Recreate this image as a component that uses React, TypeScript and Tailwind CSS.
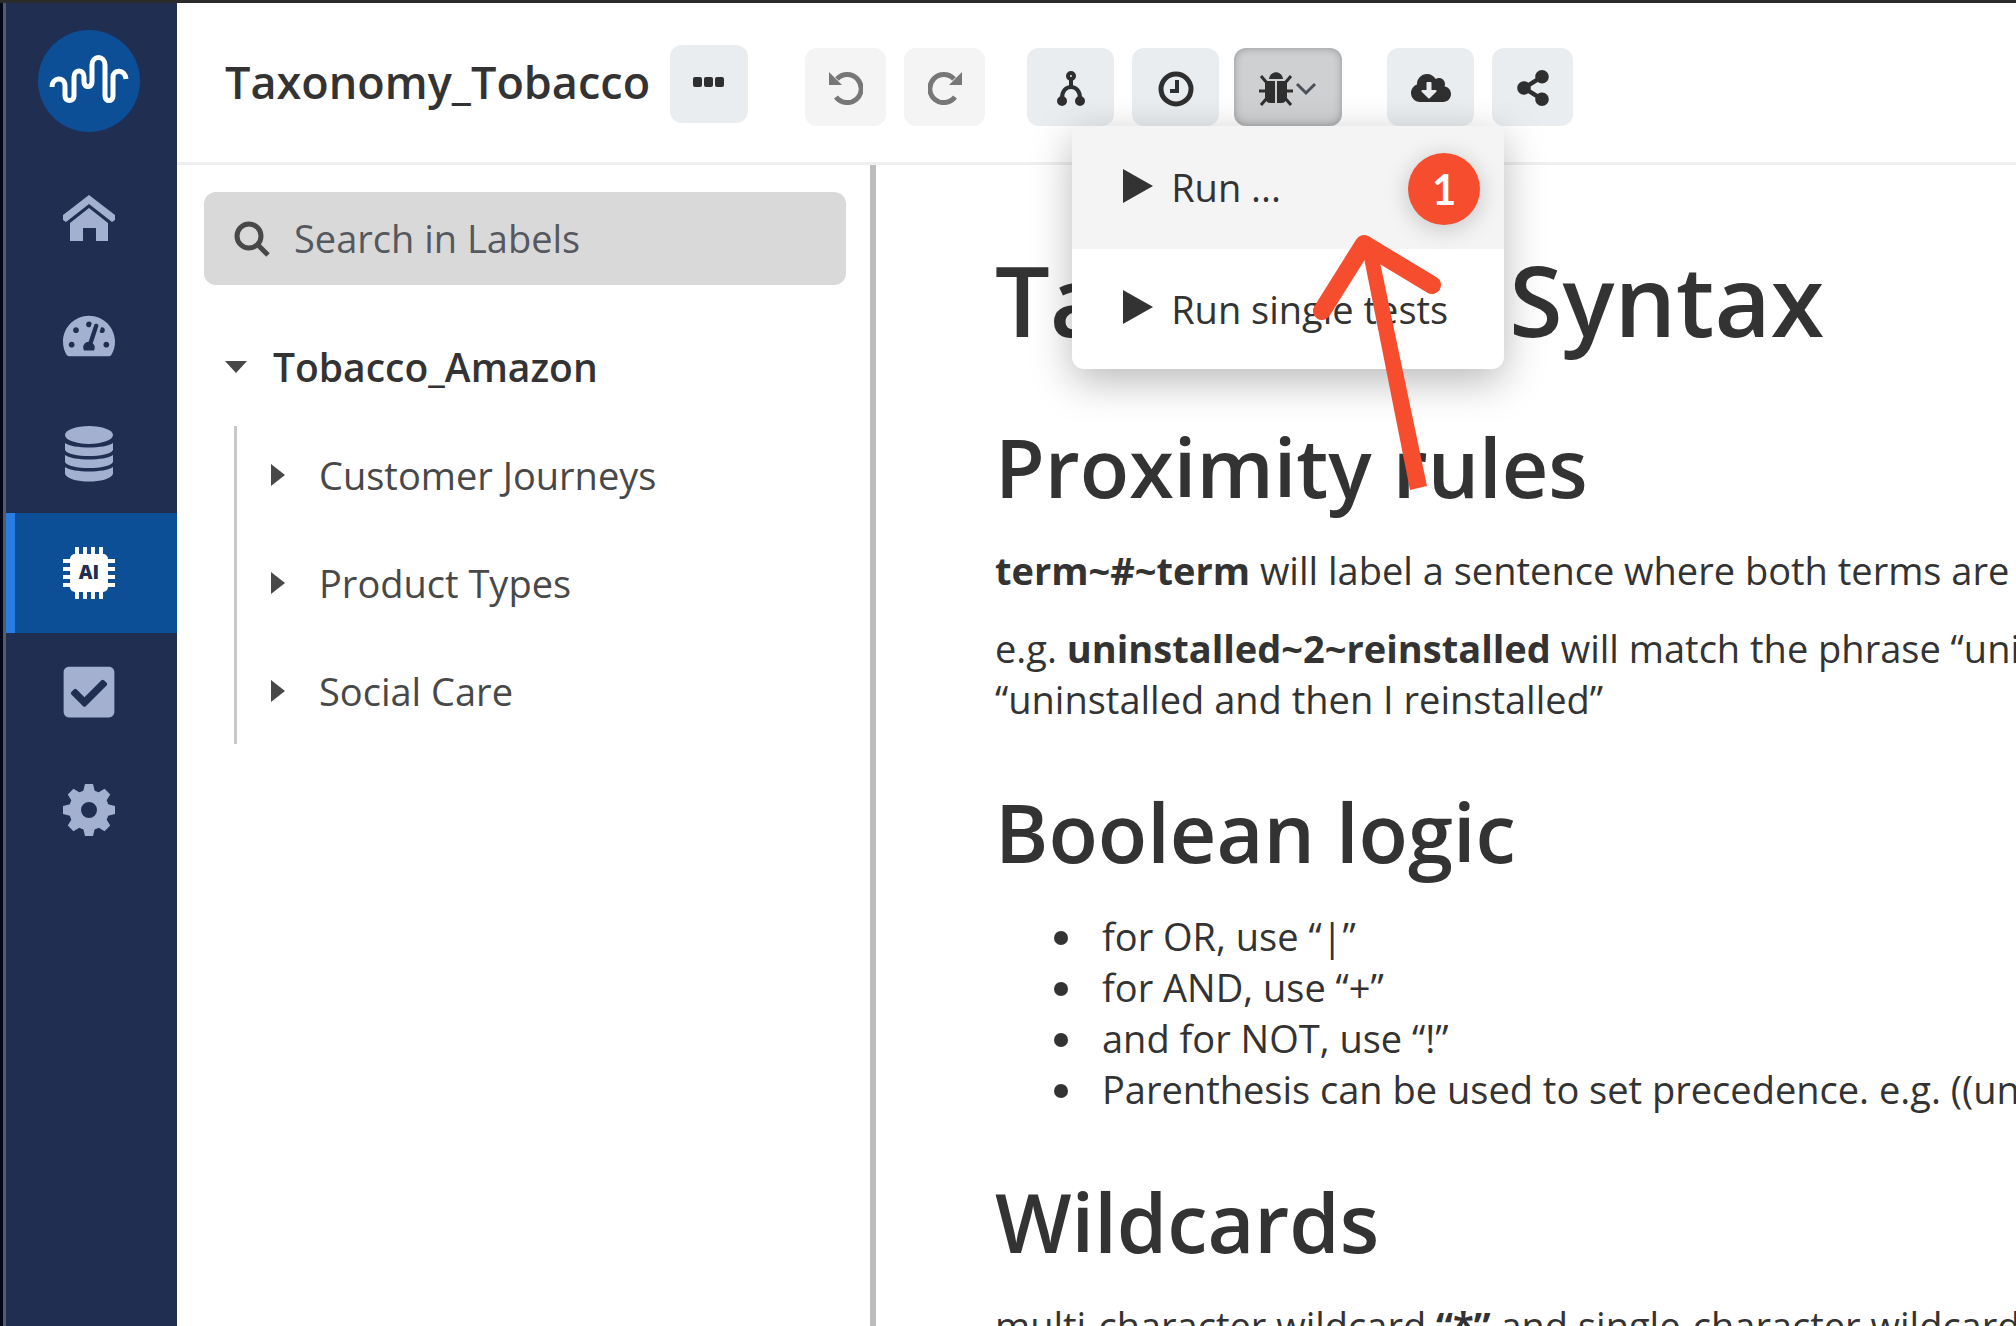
import React from 'react';
import { FaCheckSquare, FaCloudDownloadAlt, FaShareAlt, FaTachometerAlt } from 'react-icons/fa';

const Logo = () => (
  <svg viewBox="0 0 102 102" className="h-[102px] w-[102px]" aria-hidden="true">
    <circle cx="51" cy="51" r="51" fill="#0c4f96" />
    <path
      d="M14 57c0-10 13-11 13-1v10c0 6 9 6 9 0V47c0-8 10-8 10 0v5c0 6 8 6 8 0V35c0-10 13-10 13 0v31c0 6 8 6 8 0V47c0-8 12-8 13 2"
      fill="none"
      stroke="#fff"
      strokeWidth="5"
    />
  </svg>
);

const HomeIcon = () => (
  <svg viewBox="0 0 52 46" className="h-[46px] w-[52px]" fill="currentColor" aria-hidden="true">
    <path d="M26 0 52 20v5l-3 2L26 9 3 27l-3-2v-5z" />
    <path d="M26 13 45 28v18H33V33H20v13H7V28z" />
  </svg>
);

const DatabaseIcon = () => (
  <svg viewBox="0 0 48 56" className="h-[56px] w-[48px]" fill="currentColor" aria-hidden="true">
    <ellipse cx="24" cy="9" rx="24" ry="9" />
    <path d="M0 17c8 6 40 6 48 0v7c-4 8-44 8-48 0z" />
    <path d="M0 29c8 6 40 6 48 0v7c-4 8-44 8-48 0z" />
    <path d="M0 41c8 6 40 6 48 0v7c-4 10-44 10-48 0z" />
  </svg>
);

const ChipIcon = () => (
  <svg viewBox="0 0 52 52" className="h-[52px] w-[52px]" aria-hidden="true">
    <path
      d="M14 0v52M22 0v52M30 0v52M38 0v52M0 14h52M0 22h52M0 30h52M0 38h52"
      stroke="#fff"
      strokeWidth="4"
    />
    <rect x="7" y="7" width="38" height="38" rx="5" fill="#fff" />
    <text x="26" y="32" textAnchor="middle" fontSize="19" fontWeight="800" fill="#202e52">
      AI
    </text>
  </svg>
);

const GearIcon = () => (
  <svg viewBox="0 0 52 52" className="h-[52px] w-[52px]" aria-hidden="true">
    <circle cx="26" cy="26" r="14" fill="none" stroke="currentColor" strokeWidth="12" />
    {[0, 45, 90, 135].map((angle) => (
      <path key={angle} d="M20 8 22 0h8l2 8zM20 44l2 8h8l2-8z" fill="currentColor" transform={`rotate(${angle} 26 26)`} />
    ))}
  </svg>
);

const DotsIcon = () => (
  <svg viewBox="0 0 32 10" className="h-[10px] w-[32px]" fill="currentColor" aria-hidden="true">
    <rect width="9" height="10" rx="2" />
    <rect x="11" width="9" height="10" rx="2" />
    <rect x="22" width="9" height="10" rx="2" />
  </svg>
);

const UndoIcon = () => (
  <svg viewBox="0 0 34 34" className="h-[34px] w-[34px]" aria-hidden="true">
    <path d="M8 8A14 14 0 1 1 7 26" fill="none" stroke="currentColor" strokeWidth="5" />
    <path d="M0 1 13 14H0z" fill="currentColor" />
  </svg>
);

const RedoIcon = () => (
  <svg viewBox="0 0 34 34" className="h-[34px] w-[34px]" aria-hidden="true">
    <path d="M26 8A14 14 0 1 0 27 26" fill="none" stroke="currentColor" strokeWidth="5" />
    <path d="M34 1 21 14h13z" fill="currentColor" />
  </svg>
);

const BranchIcon = () => (
  <svg viewBox="0 0 30 36" className="h-[36px] w-[30px]" fill="none" stroke="currentColor" strokeWidth="4" aria-hidden="true">
    <circle cx="15" cy="5" r="3" />
    <circle cx="6" cy="30" r="3" fill="currentColor" />
    <circle cx="24" cy="30" r="3" fill="currentColor" />
    <path d="M15 8v8M6 27c0-7 4-11 9-11s9 4 9 11" />
  </svg>
);

const ClockIcon = () => (
  <svg viewBox="0 0 36 36" className="h-[36px] w-[36px]" fill="none" stroke="currentColor" aria-hidden="true">
    <circle cx="18" cy="18" r="15" strokeWidth="5" />
    <path d="M19 9v11h-7" strokeWidth="4" />
  </svg>
);

const BugIcon = () => (
  <svg viewBox="0 0 34 34" className="h-[34px] w-[34px]" aria-hidden="true">
    <path d="M10 7c1-9 13-9 14 0z" fill="currentColor" />
    <path d="M6 9h10v22h-5c-3 0-5-3-5-7zM18 9h10v15c0 4-2 7-5 7h-5z" fill="currentColor" />
    <path d="M8 11 2 4M26 11l6-7M8 26l-6 7M26 26l6 7M0 19h8M26 19h8" stroke="currentColor" strokeWidth="3" />
  </svg>
);

const SearchIcon = () => (
  <svg viewBox="0 0 36 36" className="h-[36px] w-[36px]" fill="none" stroke="currentColor" strokeWidth="5" aria-hidden="true">
    <circle cx="15" cy="15" r="12" />
    <path d="M24 24 34 34" />
  </svg>
);

const PlayIcon = () => (
  <svg viewBox="0 0 30 34" className="mb-1 h-[34px] w-[30px]" fill="currentColor" aria-hidden="true">
    <path d="M0 0 30 17 0 34z" />
  </svg>
);

const navItems = [
  { label: 'Home', icon: <HomeIcon /> },
  { label: 'Dashboard', icon: <FaTachometerAlt size={52} /> },
  { label: 'Data', icon: <DatabaseIcon /> },
  { label: 'AI', icon: <ChipIcon />, active: true },
  { label: 'Tasks', icon: <FaCheckSquare size={58} /> },
  { label: 'Settings', icon: <GearIcon /> },
];

const labels = ['Customer Journeys', 'Product Types', 'Social Care'];

const toolButton = 'flex h-[78px] items-center justify-center rounded-xl bg-[#e9edf0] text-[#2f2f2f]';
const disabledButton = 'flex h-[78px] w-[81px] items-center justify-center rounded-xl bg-[#f4f4f4] pt-0.5 text-[#777]';

const Sidebar = () => (
  <nav className="flex w-[177px] shrink-0 flex-col items-stretch border-l-[3px] border-[#00081a] bg-[#202e52]">
    <div className="flex-1 border-l-[3px] border-[#555c68]">
      <a href="#" aria-label="Start" className="flex h-[156px] justify-center pt-[27px] pr-1.5">
        <Logo />
      </a>
      {navItems.map((item) => (
        <a
          key={item.label}
          href="#"
          aria-label={item.label}
          className={
            item.active
              ? 'flex h-[120px] items-center justify-center border-l-[9px] border-[#2a7de0] bg-[#0c4f96] pr-[15px] text-white'
              : 'flex h-[118px] items-center justify-center pr-1.5 text-[#a3b0cf]'
          }
        >
          {item.icon}
        </a>
      ))}
    </div>
  </nav>
);

const RunMenu = () => (
  <div className="absolute top-full -right-[162px] z-10 w-[432px] rounded-b-xl bg-white text-[38px] leading-[51px] text-[#333] shadow-[0_12px_42px_rgba(0,0,0,0.28)]">
    <button className="flex h-[123px] w-full items-center gap-[18px] bg-[#f4f4f4] pl-[51px]">
      <PlayIcon />
      Run ...
    </button>
    <button className="flex h-[120px] w-full items-center gap-[18px] pl-[51px]">
      <PlayIcon />
      Run single tests
    </button>

    {/* Step marker and pointer */}
    <span className="absolute top-[27px] right-6 flex h-[72px] w-[72px] items-center justify-center rounded-full bg-[#f54d2e] font-['Lato',sans-serif] text-[42px] font-bold text-white shadow-[0_4px_24px_rgba(0,0,0,0.2)]">
      1
    </span>
    <svg viewBox="0 0 140 270" className="absolute top-[102px] left-[236px] h-[270px] w-[140px]" fill="none" stroke="#f54d2e" aria-hidden="true">
      <path d="M14 83 56 16 124 57" strokeWidth="18" strokeLinecap="round" strokeLinejoin="round" />
      <path d="M54 20h15l50 238-17 4z" fill="#f54d2e" stroke="none" />
    </svg>
  </div>
);

const Header = () => (
  <header className="flex h-[162px] shrink-0 items-start border-b-[3px] border-[#efefef] pt-[42px] pl-12">
    <h1 className="text-[45px] leading-[74px] font-semibold">Taxonomy_Tobacco</h1>
    <button aria-label="More" className={`${toolButton} ml-5 w-[78px] pb-1`}>
      <DotsIcon />
    </button>
    <div className="mt-[3px] ml-[57px] flex gap-[18px]">
      <button aria-label="Undo" disabled className={disabledButton}>
        <UndoIcon />
      </button>
      <button aria-label="Redo" disabled className={disabledButton}>
        <RedoIcon />
      </button>
    </div>
    <div className="mt-[3px] ml-[42px] flex gap-[18px]">
      <button aria-label="Versions" className={`${toolButton} w-[87px] pt-1`}>
        <BranchIcon />
      </button>
      <button aria-label="History" className={`${toolButton} w-[87px] pt-1`}>
        <ClockIcon />
      </button>
      <div className="relative -ml-[3px]">
        <button
          aria-label="Test"
          className="flex h-[78px] w-[108px] items-center justify-center gap-0.5 rounded-xl bg-[#cfd0d2] pt-1 text-[#2f2f2f] shadow-[inset_0_0_8px_rgba(0,0,0,0.3)]"
        >
          <BugIcon />
          <svg viewBox="0 0 22 14" className="h-[14px] w-[22px]" fill="none" stroke="#4b4f58" strokeWidth="3" aria-hidden="true">
            <path d="M2 2l9 9 9-9" />
          </svg>
        </button>
        <RunMenu />
      </div>
    </div>
    <div className="mt-[3px] ml-[45px] flex gap-[18px]">
      <button aria-label="Download" className={`${toolButton} w-[87px] pt-0.5`}>
        <FaCloudDownloadAlt size={40} />
      </button>
      <button aria-label="Share" className={`${toolButton} w-[81px] pt-0.5`}>
        <FaShareAlt size={36} />
      </button>
    </div>
  </header>
);

const LabelTree = () => (
  <aside className="w-[699px] shrink-0 border-r-[6px] border-[#bdbdbf] pt-[27px] pr-6 pl-[27px]">
    <label className="flex h-[93px] items-center gap-6 rounded-xl bg-[#d9d9d9] pl-[30px] text-[#484848]">
      <SearchIcon />
      <input
        type="text"
        aria-label="Search in Labels"
        placeholder="Search in Labels"
        className="min-w-0 flex-1 bg-transparent text-[38px] leading-[51px] outline-none placeholder:text-[#55585e]"
      />
    </label>
    <button className="mt-7 flex h-[108px] items-center gap-[26px] pl-[21px] text-[39px] font-semibold">
      <svg viewBox="0 0 22 12" className="h-[12px] w-[22px]" fill="#484848" aria-hidden="true">
        <path d="M0 0h22L11 12z" />
      </svg>
      Tobacco_Amazon
    </button>
    <ul className="mt-[5px] ml-[30px] space-y-[10px] border-l-[3px] border-[#c8c8c8] pb-1">
      {labels.map((label) => (
        <li key={label}>
          <button className="flex h-[98px] items-center gap-[34px] pl-[34px] text-[38px] text-[#484848]">
            <svg viewBox="0 0 14 22" className="h-[22px] w-[14px]" fill="currentColor" aria-hidden="true">
              <path d="M0 0 14 11 0 22z" />
            </svg>
            {label}
          </button>
        </li>
      ))}
    </ul>
  </aside>
);

const SyntaxGuide = () => (
  <main className="min-w-0 flex-1 overflow-hidden pt-[72px] pl-[119px] text-[38px] leading-[51px] whitespace-nowrap">
    <h2 className="mb-[54px] text-[97px] leading-[124px] font-semibold">Taxonomy Syntax</h2>

    <h3 className="mb-[26px] text-[81px] leading-[104px] font-semibold">Proximity rules</h3>
    <p className="mb-[27px]">
      <strong>term~#~term</strong> will label a sentence where both terms are within # words
    </p>
    <p>
      e.g. <strong>uninstalled~2~reinstalled</strong> will match the phrase “uninstalled and reinstalled” or
      <br />
      “uninstalled and then I reinstalled”
    </p>

    <h3 className="mt-[55px] mb-[27px] text-[81px] leading-[104px] font-semibold">Boolean logic</h3>
    <ul className="list-disc pl-[93px]">
      <li className="pl-[14px]">for OR, use “|”</li>
      <li className="pl-[14px]">for AND, use “+”</li>
      <li className="pl-[14px]">and for NOT, use “!”</li>
      <li className="pl-[14px]">Parenthesis can be used to set precedence. e.g. ((uninstalled|deleted)+app)</li>
    </ul>

    <h3 className="mt-[55px] mb-[26px] text-[81px] leading-[104px] font-semibold">Wildcards</h3>
    <p>
      multi-character wildcard <strong>“*”</strong> and single-character wildcard <strong>“?”</strong>
    </p>
  </main>
);

const App: React.FC = () => {
  return (
    <div className="flex h-screen flex-col overflow-hidden border-t-[3px] border-[#2b2b2b] bg-white font-['Open_Sans','Noto_Sans',sans-serif] text-[#333]">
      <div className="flex min-h-0 flex-1">
        <Sidebar />
        <div className="flex min-w-0 flex-1 flex-col">
          <Header />
          <div className="flex min-h-0 flex-1">
            <LabelTree />
            <SyntaxGuide />
          </div>
        </div>
      </div>
    </div>
  );
};

export default App;
